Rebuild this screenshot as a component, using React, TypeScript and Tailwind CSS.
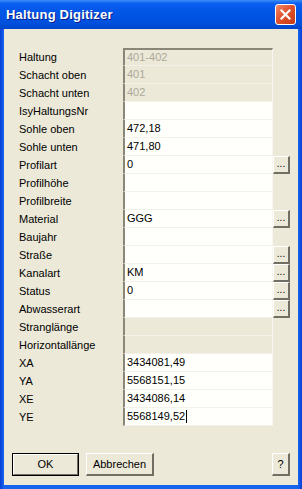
import React from 'react';

type Row = {
  label: string;
  value?: string;
  disabled?: boolean;
  button?: boolean;
  caret?: boolean;
};

const rows: Row[] = [
  { label: 'Haltung', value: '401-402', disabled: true },
  { label: 'Schacht oben', value: '401', disabled: true },
  { label: 'Schacht unten', value: '402', disabled: true },
  { label: 'IsyHaltungsNr' },
  { label: 'Sohle oben', value: '472,18' },
  { label: 'Sohle unten', value: '471,80' },
  { label: 'Profilart', value: '0', button: true },
  { label: 'Profilhöhe' },
  { label: 'Profilbreite' },
  { label: 'Material', value: 'GGG', button: true },
  { label: 'Baujahr' },
  { label: 'Straße', button: true },
  { label: 'Kanalart', value: 'KM', button: true },
  { label: 'Status', value: '0', button: true },
  { label: 'Abwasserart', button: true },
  { label: 'Stranglänge', disabled: true },
  { label: 'Horizontallänge', disabled: true },
  { label: 'XA', value: '3434081,49' },
  { label: 'YA', value: '5568151,15' },
  { label: 'XE', value: '3434086,14' },
  { label: 'YE', value: '5568149,52', caret: true },
];

function FieldRow({ row, first }: { row: Row; first: boolean }) {
  return (
    <div className="flex h-[18px] items-stretch">
      <div className="w-[104px] flex items-center text-black">{row.label}</div>
      <div
        className={`w-[150px] flex items-center pl-[2px] border-l-2 border-l-[#8a8778] border-b border-b-[#f4f2e8] border-r border-r-[#f7f6ef] ${
          first ? 'border-t-2 border-t-[#8a8778]' : ''
        } ${row.disabled ? 'bg-[#ece9d8] text-[#aca899]' : 'bg-[#fffffb] text-black'}`}
      >
        <span>{row.value ?? ''}</span>
        {row.caret ? <span className="inline-block w-px h-[13px] bg-black ml-px" /> : null}
      </div>
      {row.button ? (
        <div className="w-[17px] h-[18px] flex items-end justify-center pb-[3px] bg-[#ece9d8] border-t border-l border-t-white border-l-white border-b-2 border-r-2 border-b-[#716f64] border-r-[#716f64] text-[10px] leading-none">
          ...
        </div>
      ) : null}
    </div>
  );
}

export default function App() {
  return (
    <div
      className="w-[302px] h-[489px] flex flex-col bg-[#0831d9] overflow-hidden text-[11px]"
      style={{ fontFamily: '"Liberation Sans", Arial, sans-serif' }}
    >
      {/* title bar */}
      <div className="h-[29px] shrink-0 flex items-center justify-between pl-[6px] pr-[6px] bg-[linear-gradient(180deg,#3d8cf5_0%,#0a5ef0_12%,#0055e5_45%,#0050dd_80%,#0045c8_100%)]">
        <span className="text-white font-bold text-[13px] tracking-[0.2px] [text-shadow:1px_1px_0_#0a1e8a]">
          Haltung Digitizer
        </span>
        <div className="w-[21px] h-[21px] rounded-[3px] border border-white bg-[linear-gradient(135deg,#f08a6a_0%,#e2532e_45%,#c23a12_100%)] flex items-center justify-center">
          <svg width="11" height="11" viewBox="0 0 11 11">
            <path d="M1.5 1.5 L9.5 9.5 M9.5 1.5 L1.5 9.5" stroke="white" strokeWidth="2.2" strokeLinecap="square" />
          </svg>
        </div>
      </div>

      {/* body */}
      <div className="flex-1 flex px-[4px] pb-[4px] bg-[linear-gradient(90deg,#0a3fd8_0px,#1664ee_4px,#1664ee_calc(100%-4px),#0a3fd8_100%)]">
        <div className="flex-1 bg-[#ece9d8] flex flex-col pt-[19px] pl-[15px]">
          <div className="flex flex-col">
            {rows.map((r, i) => (
              <FieldRow key={r.label} row={r} first={i === 0} />
            ))}
          </div>

          <div className="flex items-center mt-[27px] pr-[8px]">
            <div className="w-[67px] h-[23px] ml-[-7px] border border-black bg-[#ece9d8] flex">
              <div className="flex-1 flex items-center justify-center border-t border-l border-t-white border-l-white border-b border-r border-b-[#716f64] border-r-[#716f64]">
                OK
              </div>
            </div>
            <div className="w-[68px] h-[23px] ml-[7px] flex items-center justify-center bg-[#ece9d8] border-t border-l border-t-white border-l-white border-b-2 border-r-2 border-b-[#716f64] border-r-[#716f64]">
              Abbrechen
            </div>
            <div className="flex-1" />
            <div className="w-[18px] h-[23px] flex items-center justify-center bg-[#ece9d8] border-t border-l border-t-white border-l-white border-b-2 border-r-2 border-b-[#716f64] border-r-[#716f64]">
              ?
            </div>
          </div>
        </div>
      </div>
    </div>
  );
}
